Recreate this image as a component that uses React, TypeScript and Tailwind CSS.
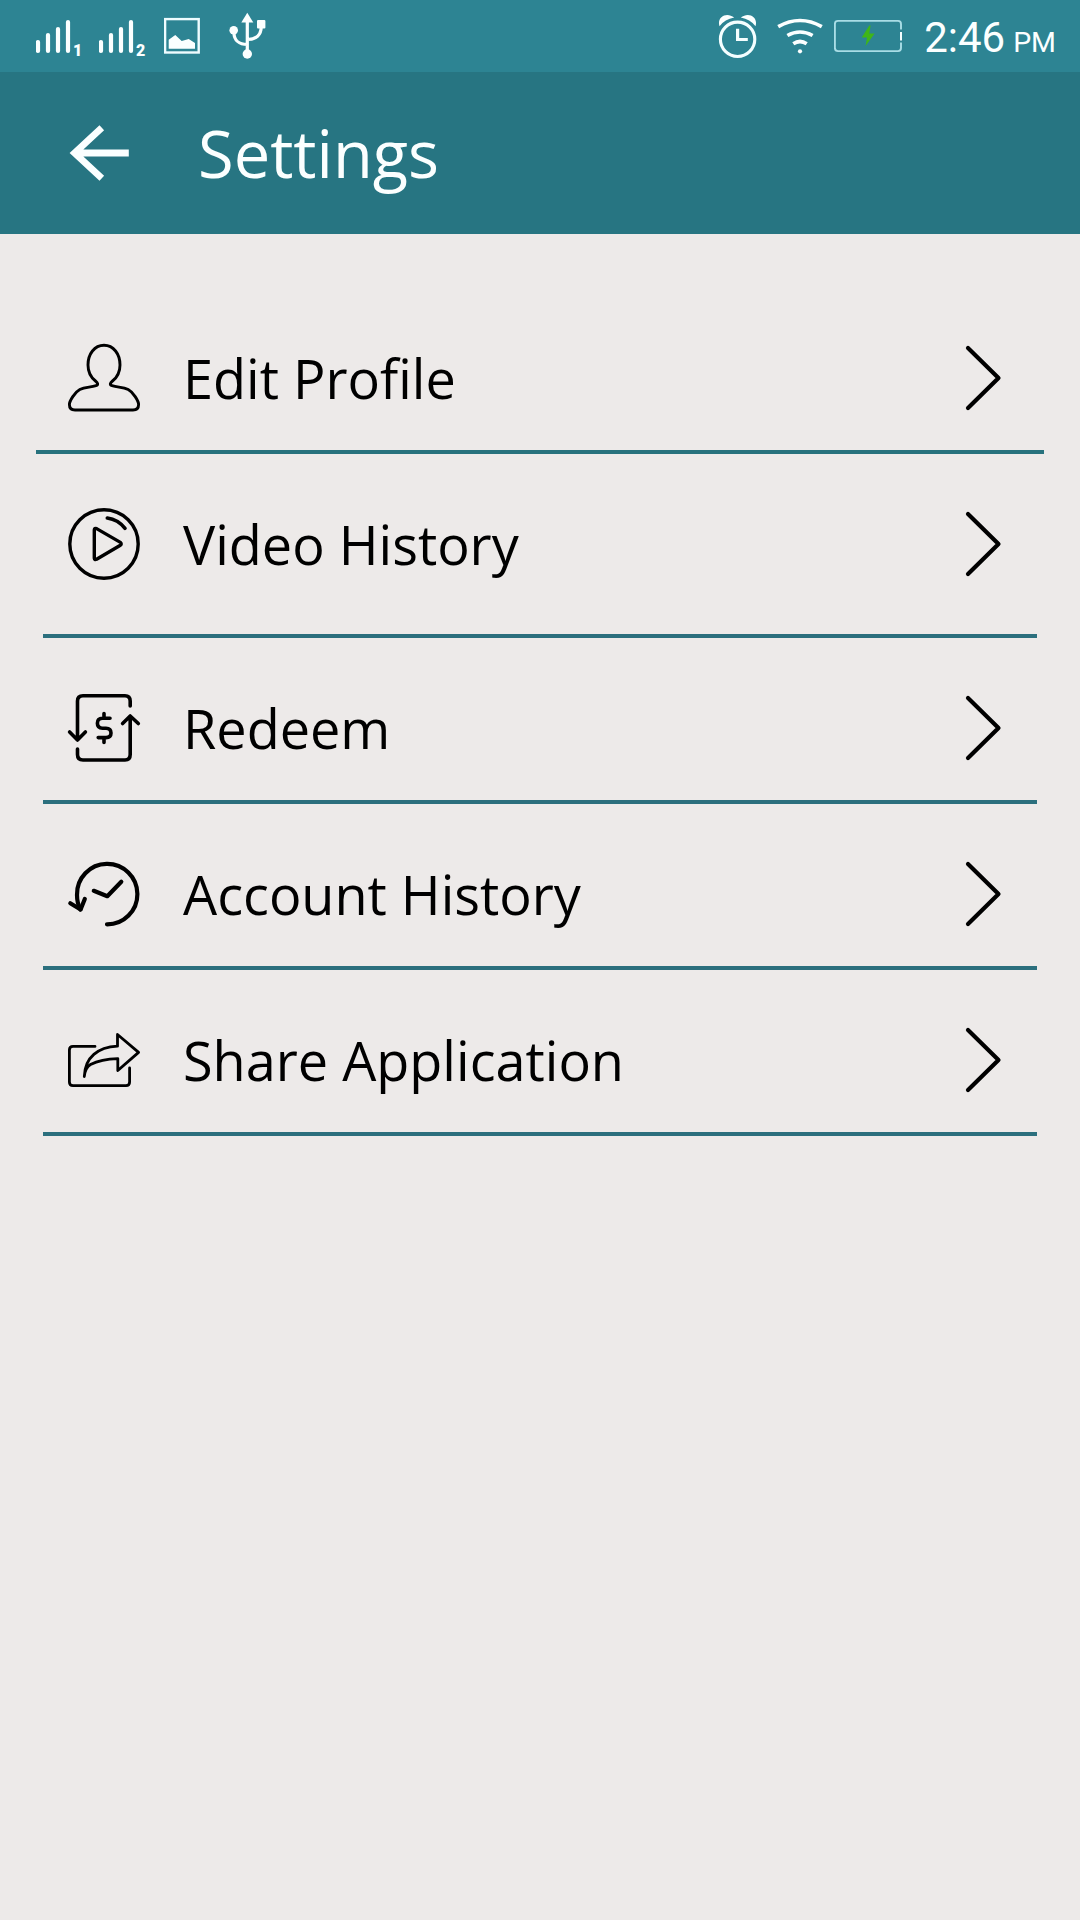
import type { ReactNode } from "react";

function SignalIcon({ slot }: { slot: string }) {
  return (
    <div className="flex h-[72px]">
      <svg className="h-[72px] w-[36px]" viewBox="0 0 36 72" fill="none" stroke="#fbffff" strokeWidth="4.2" strokeLinecap="round">
        <path d="M2 42V51M12 35V51M22 29V51M32 22V51" />
      </svg>
      <span className="mt-[42px] ml-px w-3 text-[16px] leading-[18px] font-black">{slot}</span>
    </div>
  );
}

function PictureIcon() {
  return (
    <svg className="ml-[16px] h-[72px] w-[36px]" viewBox="164 0 36 72">
      <rect x="165.1" y="19.1" width="33.6" height="33.4" fill="none" stroke="#eefcff" strokeWidth="2.4" />
      <path d="M168.7 39.7L175.3 35L181.7 41L188.7 39L195 43V48.7H168.7Z" fill="#fbffff" />
    </svg>
  );
}

function UsbIcon() {
  return (
    <svg className="ml-[28px] h-[72px] w-[40px]" viewBox="228 0 40 72" fill="#fbffff">
      <path d="M247.3 12.7L253.3 22.5H241.3Z" />
      <circle cx="247.3" cy="54" r="4.7" />
      <circle cx="233.7" cy="30.3" r="4.3" />
      <rect x="257" y="20" width="8.4" height="8.6" rx="1" />
      <path d="M247.3 20V52M234 33C234 40 239 44.5 247.3 44.5M261.2 27C261.2 35 256 39.5 247.3 39.5" fill="none" stroke="#fbffff" strokeWidth="3.2" />
    </svg>
  );
}

function AlarmIcon() {
  return (
    <svg className="h-[72px] w-[40px]" viewBox="718 0 40 72" fill="none" stroke="#f4feff">
      <circle cx="737.6" cy="39.3" r="17.2" strokeWidth="3.1" />
      <path d="M737.6 28.7V39.5H747.8" strokeWidth="3.2" />
      <path d="M719.5 26.3C716.5 16.5 727 11.5 734.2 17.6C728 18.7 723 21.5 719.5 26.3ZM755.5 26.3C758.5 16.5 748 11.5 740.8 17.6C747 18.7 752 21.5 755.5 26.3Z" fill="#fbffff" stroke="none" />
    </svg>
  );
}

function WifiIcon() {
  return (
    <svg className="ml-[19px] h-[72px] w-[46px]" viewBox="777 0 46 72" fill="none" stroke="#fbffff" strokeWidth="3.7">
      <path d="M778.2 26.7Q800 14.3 821.8 26.7M787.4 35.5Q800 28.5 812.6 35.5M793.3 43.7Q800 39.3 806.7 43.7" />
      <circle cx="800" cy="51.3" r="2.1" fill="#fbffff" stroke="none" />
    </svg>
  );
}

function BatteryIcon() {
  return (
    <svg className="ml-[11px] h-[72px] w-[68px]" viewBox="834 0 68 72" fill="none">
      <path d="M901 29.5V24Q901 20.9 898 20.9H838Q834.9 20.9 834.9 24V48Q834.9 51.1 838 51.1H898Q901 51.1 901 48V42.5" stroke="#a9dde6" strokeWidth="1.9" />
      <path d="M901 32V40.5" stroke="#f4feff" strokeWidth="2" />
      <path d="M869.3 25.4L861.7 37.4H867L865.6 46L874.6 33.6H869.3L870.6 25.4Z" fill="#3fb618" />
    </svg>
  );
}

function StatusBar() {
  return (
    <div className="flex h-[72px] items-center justify-between bg-[#2d8493] pr-[24px] pl-[36px] font-['Roboto',sans-serif] text-[#fbffff]">
      <div className="flex">
        <SignalIcon slot="1" />
        <div className="ml-[14px]">
          <SignalIcon slot="2" />
        </div>
        <PictureIcon />
        <UsbIcon />
      </div>
      <div className="flex">
        <AlarmIcon />
        <WifiIcon />
        <BatteryIcon />
        <div className="ml-[22px] flex h-[72px] items-baseline whitespace-nowrap">
          <span className="text-[42px] leading-[75px]">2:46</span>
          <span className="ml-[8px] text-[28.5px]">PM</span>
        </div>
      </div>
    </div>
  );
}

function Header() {
  return (
    <header className="flex h-[162px] items-center bg-[#277582] pl-[68px] text-[#fbffff]">
      <svg className="h-[72px] w-[64px]" viewBox="68 117 64 72" fill="none" stroke="#fbffff" strokeWidth="6.8">
        <path d="M128.8 153H75M101.8 127.8L74.6 153L101.8 178.2" />
      </svg>
      <h1 className="ml-[66px] text-[65px] leading-[90px]">Settings</h1>
    </header>
  );
}

function ProfileIcon() {
  return (
    <path
      strokeWidth="2.9"
      d="M36 3.3C26.5 3.3 20 12 20 23C20 30 23 35.5 27.5 39C30 41 30.5 43 28 43.7C22 45.5 17 44.8 11.8 47.5C7 50 1.4 59 1.4 62.5C1.4 66 3.5 68 7 68H65C68.5 68 70.6 66 70.6 62.5C70.6 59 65 50 60.2 47.5C55 44.8 50 45.5 44 43.7C41.5 43 42 41 44.5 39C49 35.5 52 30 52 23C52 12 45.5 3.3 36 3.3Z"
    />
  );
}

function VideoIcon() {
  return (
    <g strokeWidth="3.4">
      <circle cx="36" cy="36" r="34.2" />
      <path d="M26.3 22V50Q26.5 52.3 28.6 51.3L52.4 37.2Q54 36 52.4 34.4L28.6 20.6Q26.5 19.7 26.3 22Z" />
      <path d="M39.3 10Q50 11.5 57 20.3" strokeWidth="3.6" />
    </g>
  );
}

function RedeemIcon() {
  return (
    <g strokeWidth="3.6">
      <path d="M62.2 14V9Q62.2 3.7 57 3.7H15Q9.5 3.7 9.5 9V48M1.6 40L9.5 48L17.4 40" />
      <path d="M9.5 57V62.5Q9.5 68 15 68H57Q62.2 68 62.2 62.5V24M54.6 31.5L62.2 24L70.3 31.5" />
      <path d="M36 21.5V26.3M42 26.3H34.5Q29.4 26.3 29.4 31.3Q29.4 36.2 34.5 36.2H38Q43 36.2 43 41Q43 45.6 38 45.6H30.2M36 45.6V50.5" />
    </g>
  );
}

function HistoryIcon() {
  return (
    <g strokeWidth="4.2">
      <path d="M39 66.3A30.2 30.2 0 1 0 9 37Q9 45 12.4 51.5" />
      <path d="M2.3 45.3L12.6 51.5L16.8 41M25.8 32.8L39.3 38.2L53.3 23.7" />
    </g>
  );
}

function ShareIcon() {
  return (
    <g strokeWidth="2.8">
      <path d="M27 22.4H5Q1.4 22.4 1.4 26V58Q1.4 61.6 5 61.6H58Q61.6 61.6 61.6 58V44" />
      <path d="M16.3 52.5C17 33 30 23.2 49.5 22.2V10.5L70.6 28.4L49.8 46.5V34.6Q33 35 22.5 40.5Q17 44 16.3 52.5Z" />
    </g>
  );
}

function MenuRow({ icon, label, first = false, tall = false }: { icon: ReactNode; label: string; first?: boolean; tall?: boolean }) {
  return (
    <li
      className={
        "mt-[18px] border-b-4 " +
        (first ? "mx-[36px] border-[#28727d] px-[32px] " : "mx-[43px] border-[#2c6f7d] px-[25px] ") +
        (tall ? "pb-[18px]" : "")
      }
    >
      <button type="button" className="flex h-[144px] w-full items-center text-left">
        <svg className="h-[72px] w-[72px] shrink-0 overflow-visible" viewBox="0 0 72 72" fill="none" stroke="#000" strokeLinecap="round" strokeLinejoin="round">
          {icon}
        </svg>
        <span className="ml-[43px] flex-1 text-[54px] leading-[74px] whitespace-nowrap">{label}</span>
        <svg className="h-[72px] w-[72px] shrink-0" viewBox="0 0 72 72" fill="none" stroke="#000" strokeWidth="4.2" strokeLinecap="round" strokeLinejoin="round">
          <path d="M28 6L58.5 36L28 66" />
        </svg>
      </button>
    </li>
  );
}

export default function App() {
  return (
    <div className="h-[1920px] w-[1080px] overflow-hidden bg-[#edeae9] font-['Open_Sans',sans-serif] text-black">
      <StatusBar />
      <Header />
      <ul className="pt-[54px]">
        <MenuRow first icon={<ProfileIcon />} label="Edit Profile" />
        <MenuRow tall icon={<VideoIcon />} label="Video History" />
        <MenuRow icon={<RedeemIcon />} label="Redeem" />
        <MenuRow icon={<HistoryIcon />} label="Account History" />
        <MenuRow icon={<ShareIcon />} label="Share Application" />
      </ul>
    </div>
  );
}
